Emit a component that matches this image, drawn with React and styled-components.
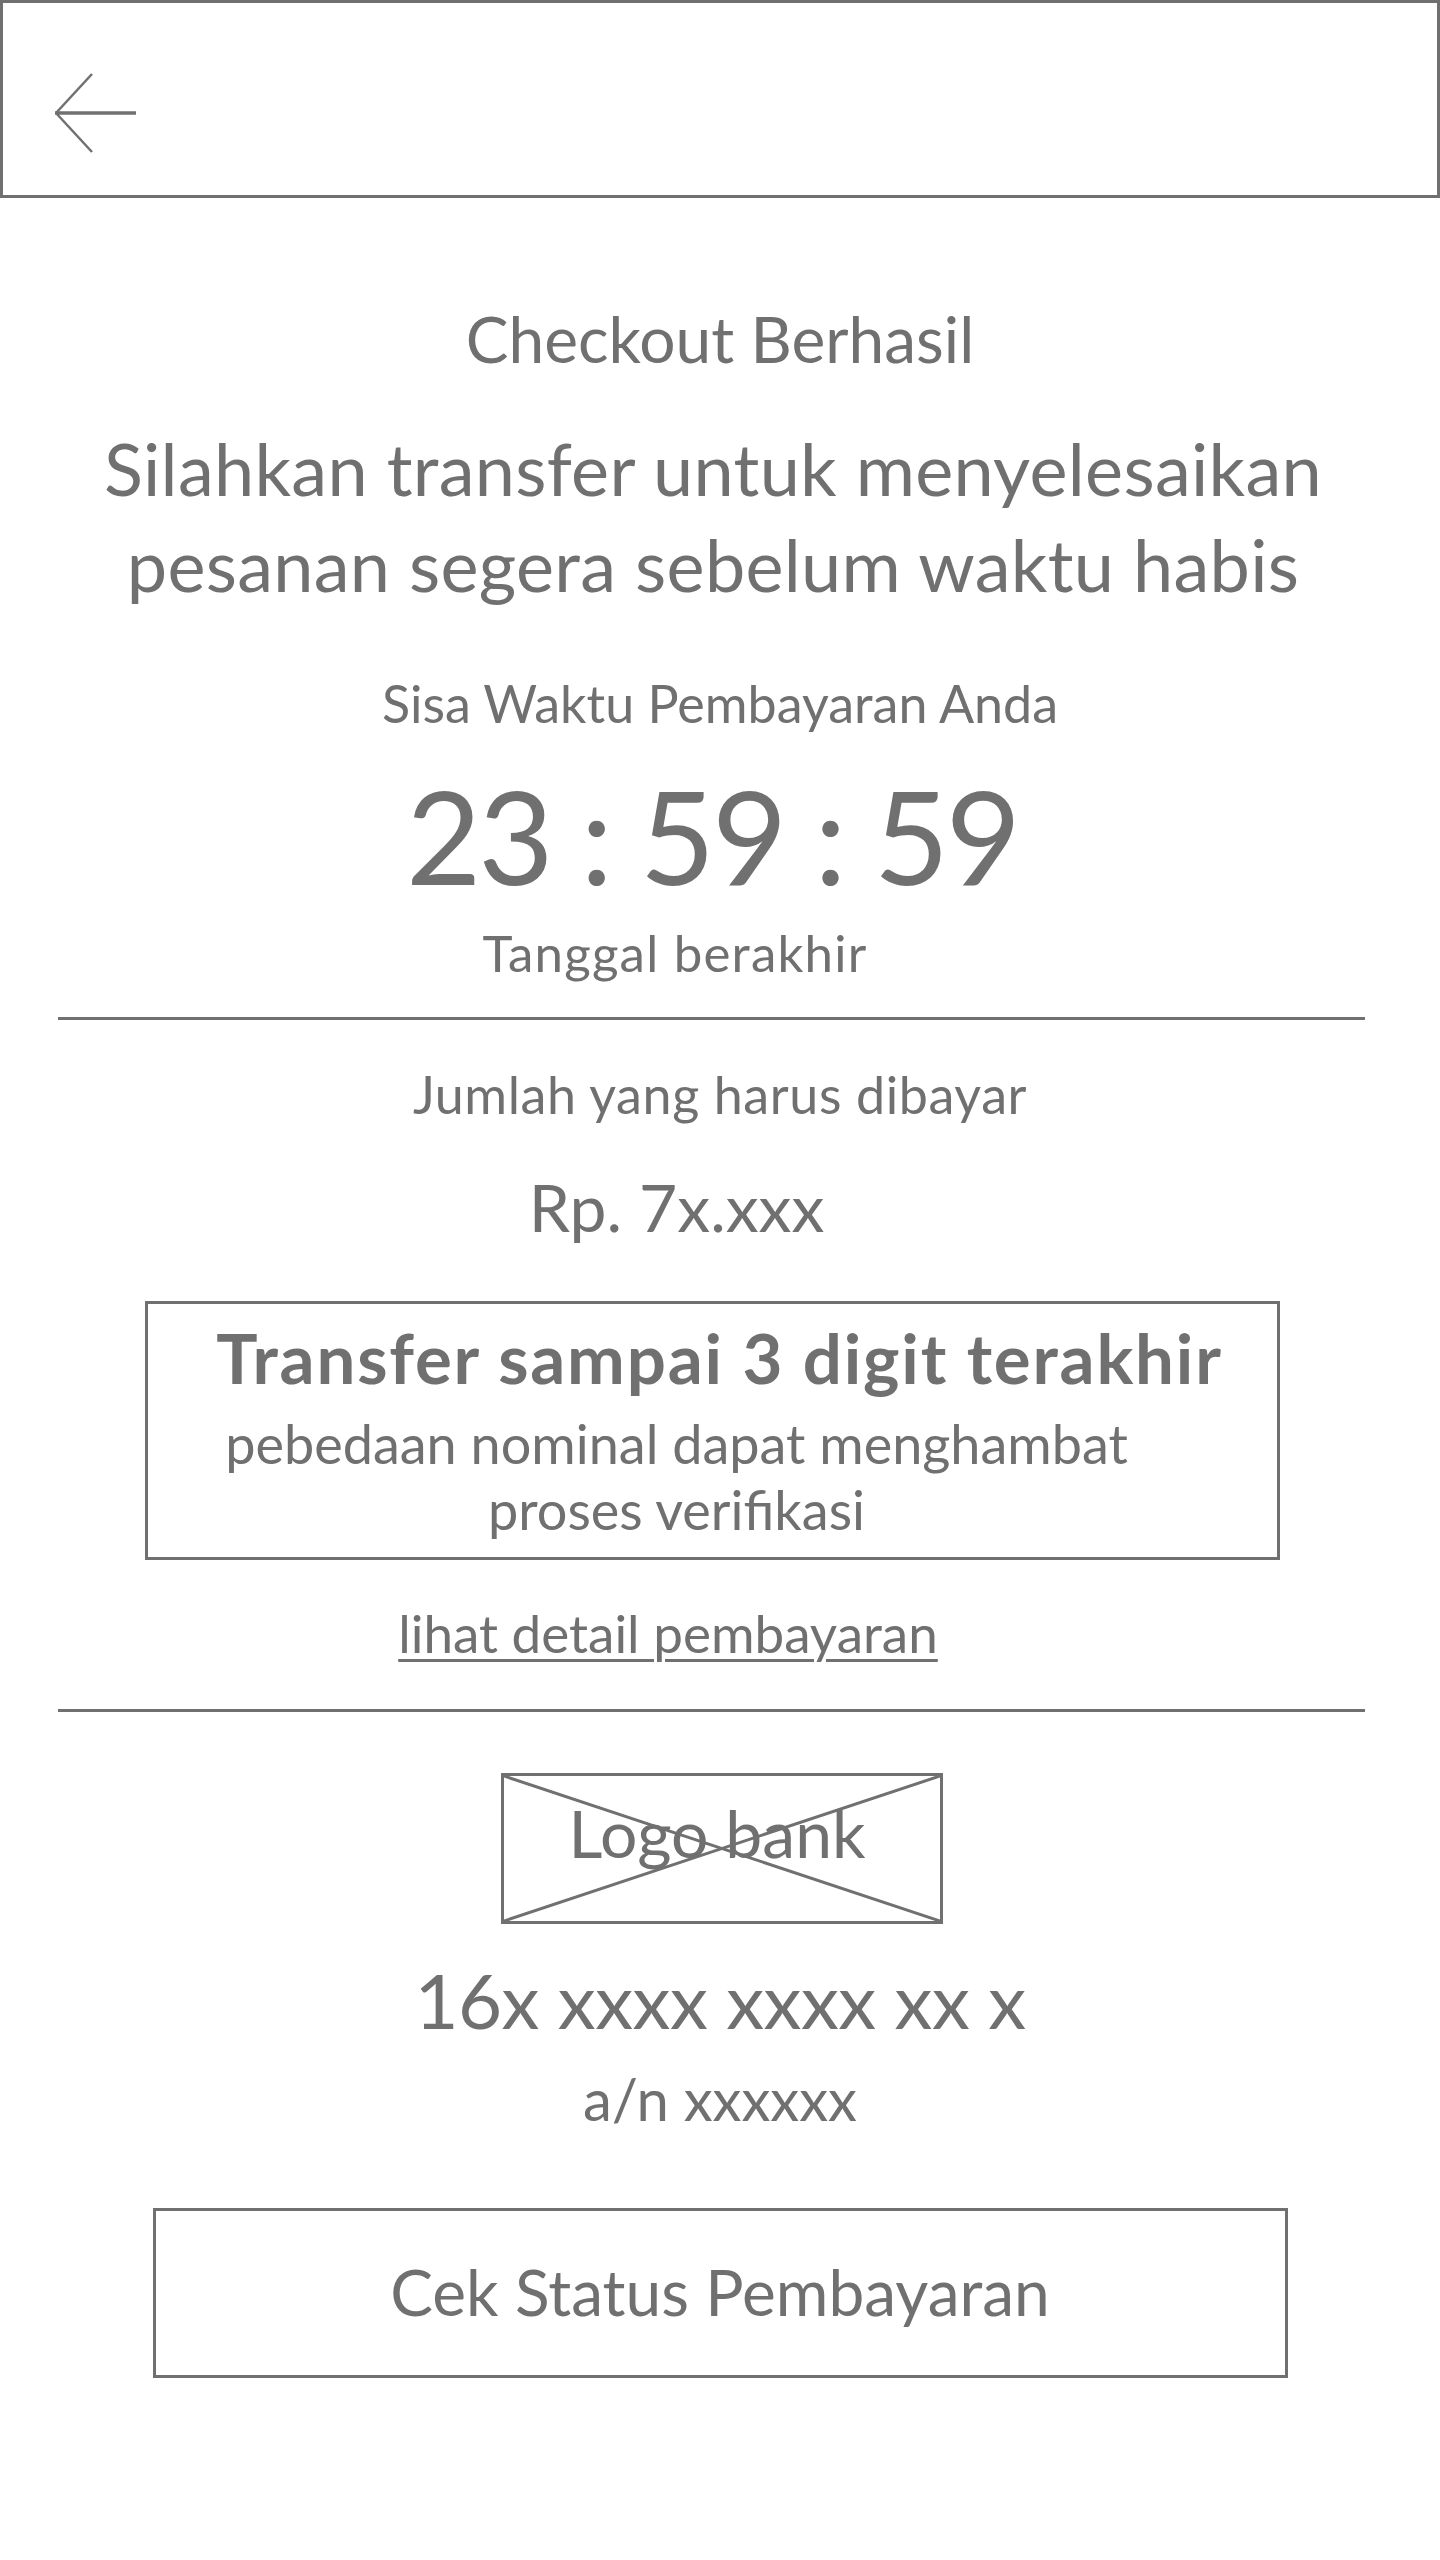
import React from "react";
import styled, { createGlobalStyle } from "styled-components";

const GRAY = "#707070";

const GlobalStyle = createGlobalStyle`
  html, body {
    margin: 0;
    padding: 0;
    background: #ffffff;
  }
  body {
    font-family: Lato, "Open Sans", "Noto Sans", sans-serif;
    color: ${GRAY};
  }
  * { box-sizing: border-box; }
`;

const Page = styled.div`
  width: 1440px;
  min-height: 2560px;
  display: flex;
  flex-direction: column;
  align-items: center;
  background: #fff;
`;

const Header = styled.header`
  align-self: stretch;
  height: 198px;
  border: 3px solid ${GRAY};
  display: flex;
  align-items: flex-start;
  padding: 64px 0 0 46px;
`;

const BackButton = styled.button`
  background: none;
  border: none;
  padding: 0;
  margin: 0;
  cursor: pointer;
  display: block;
  line-height: 0;
`;

const Text = styled.p`
  margin: ${(p) => p.$mt || 0}px ${(p) => p.$mr || 0}px 0 ${(p) => p.$ml || 0}px;
  font-size: ${(p) => p.$size}px;
  line-height: ${(p) => p.$lh || p.$size * 1.2}px;
  font-weight: ${(p) => p.$weight || 400};
  letter-spacing: ${(p) => p.$ls || 0}px;
  text-align: center;
  white-space: nowrap;
  color: ${GRAY};
`;

const Title = styled(Text)``;
const Headline = styled(Text)``;
const Caption = styled(Text)``;
const Timer = styled(Text)``;
const Amount = styled(Text)``;
const NoticeTitle = styled(Text)``;
const NoticeBody = styled(Text)``;

const Divider = styled.hr`
  align-self: flex-start;
  margin: ${(p) => p.$mt}px 0 0 58px;
  width: 1307px;
  height: 3px;
  border: none;
  background: ${GRAY};
`;

const NoticeBox = styled.section`
  margin: ${(p) => p.$mt}px 15px 0 0;
  width: 1135px;
  height: 259px;
  border: 3px solid ${GRAY};
  display: flex;
  flex-direction: column;
  align-items: center;
  padding-top: 14px;
`;

const DetailLink = styled.a`
  display: block;
  margin: ${(p) => p.$mt}px 104px 0 0;
  font-size: 53px;
  line-height: 62px;
  color: ${GRAY};
  text-decoration: underline;
  text-decoration-thickness: 3px;
  text-underline-offset: 6px;
  white-space: nowrap;
`;

const LogoPlaceholder = styled.div`
  position: relative;
  margin: ${(p) => p.$mt}px 0 0 4px;
  width: 442px;
  height: 151px;
  border: 3px solid ${GRAY};
  display: flex;
  justify-content: center;
  padding-top: 17px;
`;

const CrossLines = styled.svg`
  position: absolute;
  inset: 0;
  width: 100%;
  height: 100%;
`;

const LogoLabel = styled.span`
  position: relative;
  font-size: 66px;
  line-height: 79px;
  white-space: nowrap;
  margin-left: -10px;
`;

const StatusButton = styled.button`
  margin-top: ${(p) => p.$mt}px;
  width: 1135px;
  height: 170px;
  border: 3px solid ${GRAY};
  background: #fff;
  display: flex;
  align-items: center;
  justify-content: center;
  font-family: inherit;
  font-size: 64px;
  line-height: 76.8px;
  color: ${GRAY};
  padding: 0;
  cursor: pointer;
`;

function BackArrow() {
  return (
    <svg width="92" height="90" viewBox="0 0 92 90" fill="none">
      <line x1="7" y1="46" x2="43" y2="7" stroke={GRAY} strokeWidth="2.5" />
      <line x1="7" y1="46" x2="43" y2="85" stroke={GRAY} strokeWidth="2.5" />
      <line x1="6" y1="46" x2="87" y2="46" stroke={GRAY} strokeWidth="3.5" />
    </svg>
  );
}

export default function App() {
  return (
    <>
      <GlobalStyle />
      <Page>
        <Header>
          <BackButton aria-label="Kembali">
            <BackArrow />
          </BackButton>
        </Header>

        <Title $size={64} $mt={103}>Checkout Berhasil</Title>
        <Headline $size={72} $lh={96} $mt={42} $mr={14} $ls={0.3}>
          Silahkan transfer untuk menyelesaikan
          <br />
          pesanan segera sebelum waktu habis
        </Headline>

        <Caption $size={52} $mt={60}>Sisa Waktu Pembayaran Anda</Caption>
        <Timer $size={130} $mt={23} $mr={16} $ls={-3.2}>23 : 59 : 59</Timer>
        <Caption $size={51} $lh={58.8} $mt={11} $mr={90} $ls={1.2}>Tanggal berakhir</Caption>

        <Divider $mt={34} />

        <Caption $size={52} $lh={60} $mt={44} $ls={0.6}>Jumlah yang harus dibayar</Caption>
        <Amount $size={66} $lh={81.6} $mt={42} $mr={87}>Rp. 7x.xxx</Amount>

        <NoticeBox $mt={53}>
          <NoticeTitle $size={69} $lh={80.4} $weight={700} $ml={14} $ls={1.8}>
            Transfer sampai 3 digit terakhir
          </NoticeTitle>
          <NoticeBody $size={54} $lh={66} $mt={13} $mr={72}>
            pebedaan nominal dapat menghambat
            <br />
            proses verifikasi
          </NoticeBody>
        </NoticeBox>

        <DetailLink href="#" $mt={42}>lihat detail pembayaran</DetailLink>

        <Divider $mt={45} />

        <LogoPlaceholder $mt={61}>
          <CrossLines viewBox="0 0 436 145" preserveAspectRatio="none">
            <line x1="0" y1="0" x2="436" y2="145" stroke={GRAY} strokeWidth="3" />
            <line x1="436" y1="0" x2="0" y2="145" stroke={GRAY} strokeWidth="3" />
          </CrossLines>
          <LogoLabel>Logo bank</LogoLabel>
        </LogoPlaceholder>

        <Amount $size={76} $lh={93.6} $mt={29} $ls={-0.5}>16x xxxx xxxx xx x</Amount>
        <Caption $size={58} $lh={69.6} $mt={18}>a/n xxxxxx</Caption>

        <StatusButton $mt={74}>Cek Status Pembayaran</StatusButton>
      </Page>
    </>
  );
}
